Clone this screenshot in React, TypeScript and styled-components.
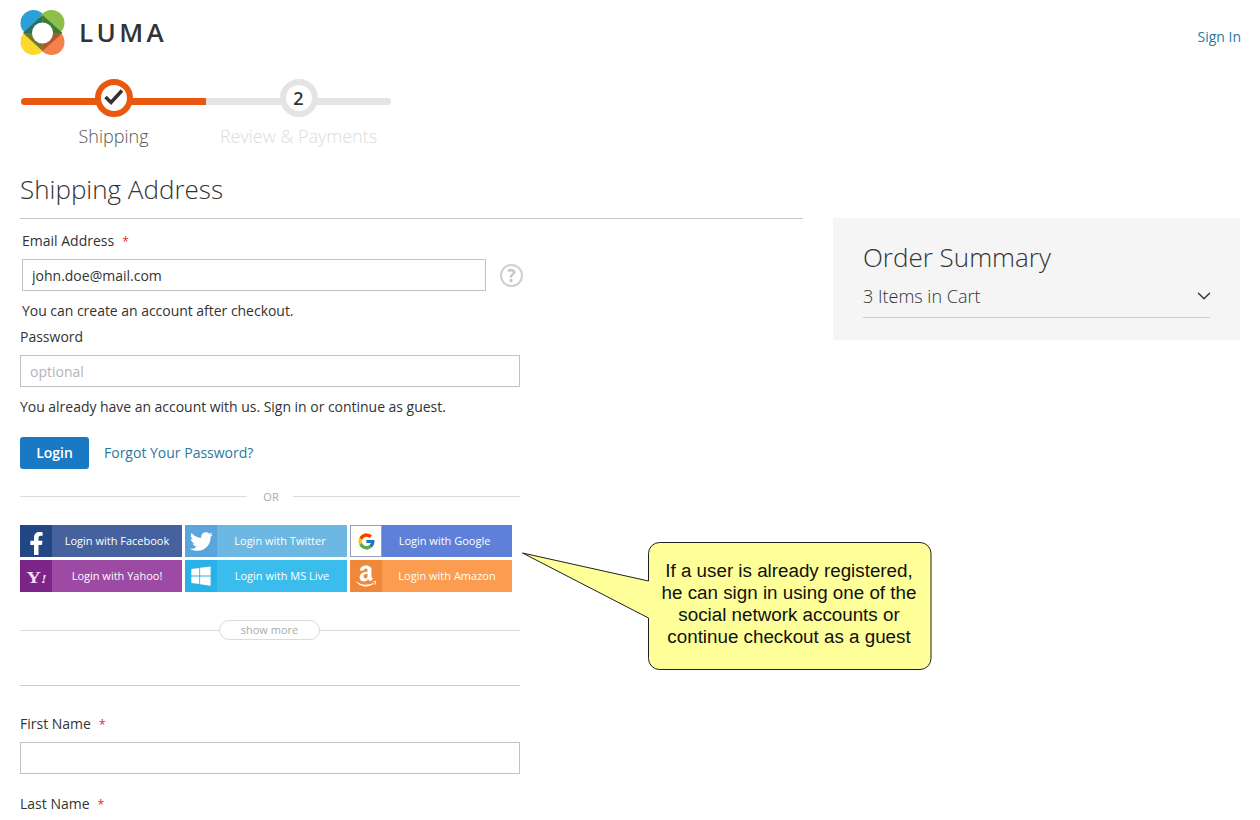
import React, { FC, ReactNode } from "react";
import styled, { createGlobalStyle } from "styled-components";
import { FaAmazon, FaFacebookF, FaTwitter, FaWindows } from "react-icons/fa";
import { FcGoogle } from "react-icons/fc";
import { FiChevronDown } from "react-icons/fi";

const GlobalStyle = createGlobalStyle`
  html, body {
    margin: 0;
    padding: 0;
    background: #fff;
  }
  * {
    box-sizing: border-box;
  }
`;

interface SocialItem {
  label: string;
  icon: ReactNode;
  iconBg: string;
  bg: string;
  inset?: number;
}

const YahooMark: FC = () => (
  <YahooText>
    Y<YahooBang>!</YahooBang>
  </YahooText>
);

const socials: SocialItem[] = [
  { label: "Login with Facebook", icon: <FacebookGlyph />, iconBg: "#234684", bg: "#46629e" },
  { label: "Login with Twitter", icon: <FaTwitter size={23} />, iconBg: "#5aa5dc", bg: "#6cb8e2", inset: 4 },
  { label: "Login with Google", icon: <FcGoogle size={19} />, iconBg: "#fff", bg: "#5f80d8", inset: 5 },
  { label: "Login with Yahoo!", icon: <YahooMark />, iconBg: "#7c2488", bg: "#9c4aa3" },
  { label: "Login with MS Live", icon: <FaWindows size={22} />, iconBg: "#29b2e8", bg: "#3abcec" },
  { label: "Login with Amazon", icon: <FaAmazon size={24} />, iconBg: "#f0883a", bg: "#fb9c50" },
];

function FacebookGlyph() {
  return <FacebookIcon size={23} />;
}

const Logo: FC = () => (
  <svg width="46" height="46" viewBox="0 0 46 46">
    <circle cx="13.5" cy="14" r="13" fill="#2a9fd8" />
    <circle cx="31.5" cy="14" r="13" fill="#8cc04a" />
    <circle cx="13.5" cy="33" r="13" fill="#fcd92e" />
    <circle cx="31.5" cy="33" r="13" fill="#f5814a" />
    <path d="M22.5 6 L22.5 24 L3 24 Z" fill="#2b6e62" />
    <path d="M22.5 6 L22.5 24 L42.5 24 Z" fill="#3f7a35" />
    <path d="M3 24 L22.5 24 L22.5 42 Z" fill="#6f7a2a" />
    <path d="M42.5 24 L22.5 24 L22.5 42 Z" fill="#a85a2a" />
    <circle cx="22.5" cy="24" r="10.5" fill="#fff" />
  </svg>
);

const SocialButton: FC<{ item: SocialItem }> = ({ item }) => (
  <Social $bg={item.bg}>
    <SocialIcon $bg={item.iconBg} $outlined={item.iconBg === "#fff"}>
      {item.icon}
    </SocialIcon>
    <SocialLabel $inset={item.inset ?? 0}>{item.label}</SocialLabel>
  </Social>
);

export default function App() {
  return (
    <Page>
      <GlobalStyle />
      <Header>
        <Brand>
          <Logo />
          <BrandName>LUMA</BrandName>
        </Brand>
        <SignIn href="#">Sign In</SignIn>
      </Header>

      <Progress>
        <Step>
          <StepBar $done />
          <StepCircle $done>
            <svg width="20" height="18" viewBox="0 0 20 18">
              <path d="M1.5 8 L7 13.5 L18 1.5" fill="none" stroke="#333" strokeWidth="3.5" />
            </svg>
          </StepCircle>
          <StepLabel>Shipping</StepLabel>
        </Step>
        <Step>
          <StepBar />
          <StepCircle>2</StepCircle>
          <StepLabel $muted>Review &amp; Payments</StepLabel>
        </Step>
      </Progress>

      <Columns>
        <FormColumn>
          <SectionTitle>Shipping Address</SectionTitle>
          <EmailBlock>
            <FieldLabel>
              Email Address<Star>*</Star>
            </FieldLabel>
            <EmailRow>
              <EmailInput readOnly value="john.doe@mail.com" />
              <HelpIcon>?</HelpIcon>
            </EmailRow>
            <Note>You can create an account after checkout.</Note>
          </EmailBlock>
          <PasswordLabel>Password</PasswordLabel>
          <TextInput readOnly placeholder="optional" />
          <Note>You already have an account with us. Sign in or continue as guest.</Note>
          <Actions>
            <LoginButton>Login</LoginButton>
            <ForgotLink href="#">Forgot Your Password?</ForgotLink>
          </Actions>
          <OrDivider>OR</OrDivider>
          <SocialGrid>
            {socials.map((item) => (
              <SocialButton key={item.label} item={item} />
            ))}
          </SocialGrid>
          <ShowMoreRow>
            <ShowMore>show more</ShowMore>
          </ShowMoreRow>
          <Separator />
          <NameLabel>
            First Name<Star>*</Star>
          </NameLabel>
          <TextInput readOnly />
          <LastNameLabel>
            Last Name<Star>*</Star>
          </LastNameLabel>
        </FormColumn>

        <Summary>
          <SummaryTitle>Order Summary</SummaryTitle>
          <SummaryRow>
            <span>3 Items in Cart</span>
            <SummaryChevron size={22} strokeWidth={1.5} />
          </SummaryRow>
        </Summary>
      </Columns>

      <Callout>
        <svg width="411" height="129" viewBox="0 0 411 129">
          <path
            d="M138.5 0.5 H399 a11 11 0 0 1 11 11 V116.5 a11 11 0 0 1 -11 11 H138.5 a11 11 0 0 1 -11 -11 V76 L1.5 11 L127.5 39 V11.5 a11 11 0 0 1 11 -11 Z"
            fill="#ffff99"
            stroke="#1f1f1f"
            strokeWidth="1"
          />
        </svg>
        <CalloutText>
          If a user is already registered,
          <br />
          he can sign in using one of the
          <br />
          social network accounts or
          <br />
          continue checkout as a guest
        </CalloutText>
      </Callout>
    </Page>
  );
}

const Page = styled.div`
  position: relative;
  width: 1260px;
  height: 820px;
  padding: 0 20px;
  overflow: hidden;
  font-family: "Open Sans", sans-serif;
  font-size: 14px;
  color: #333;
`;

const Header = styled.header`
  display: flex;
  justify-content: space-between;
  height: 78px;
  padding-top: 9px;
`;

const Brand = styled.div`
  display: flex;
  align-items: center;
  gap: 13px;
  height: 46px;
`;

const BrandName = styled.span`
  margin-top: -1px;
  font-size: 26px;
  font-weight: 600;
  letter-spacing: 3.4px;
  line-height: 1;
  color: #333;
`;

const SignIn = styled.a`
  margin: 18px -1px 0 0;
  color: #2a7a9e;
  text-decoration: none;
  line-height: 20px;
`;

const Progress = styled.div`
  display: flex;
  height: 95px;
  margin-left: 1px;
`;

const Step = styled.div`
  position: relative;
  display: flex;
  flex-direction: column;
  align-items: center;
  width: 185px;
`;

const StepBar = styled.div<{ $done?: boolean }>`
  position: absolute;
  top: 20px;
  left: 0;
  right: 0;
  height: 7px;
  background: ${(p) => (p.$done ? "#e8590f" : "#e4e4e4")};
  border-radius: ${(p) => (p.$done ? "4px 0 0 4px" : "0 4px 4px 0")};
`;

const StepCircle = styled.div<{ $done?: boolean }>`
  position: relative;
  display: flex;
  align-items: center;
  justify-content: center;
  width: 38px;
  height: 38px;
  margin-top: 1px;
  border-radius: 50%;
  background: #fff;
  border: 6px solid ${(p) => (p.$done ? "#e8590f" : "#e4e4e4")};
  font-size: 18px;
  font-weight: 600;
  color: #333;
`;

const StepLabel = styled.div<{ $muted?: boolean }>`
  margin-top: 7px;
  font-size: 18px;
  font-weight: 300;
  line-height: 24px;
  white-space: nowrap;
  color: ${(p) => (p.$muted ? "#dcdcdc" : "#555")};
`;

const Columns = styled.div`
  display: flex;
  gap: 30px;
`;

const FormColumn = styled.main`
  width: 783px;
`;

const SectionTitle = styled.h1`
  margin: 0 0 12px;
  height: 46px;
  border-bottom: 1px solid #c6c6c6;
  font-size: 26px;
  font-weight: 300;
  line-height: 33px;
`;

const EmailBlock = styled.div`
  padding-left: 2px;
`;

const FieldLabel = styled.label`
  display: block;
  line-height: 20px;
  color: #333;
`;

const Star = styled.span`
  margin-left: 8px;
  color: #e02b27;
  font-size: 12px;
`;

const EmailRow = styled.div`
  display: flex;
  align-items: center;
  gap: 14px;
  margin-top: 7px;
`;

const TextInput = styled.input`
  display: block;
  width: 500px;
  height: 32px;
  padding: 0 9px;
  border: 1px solid #c2c2c2;
  background: #fff;
  font: 14px "Open Sans", sans-serif;
  color: #333;
  outline: none;

  &::placeholder {
    color: #b5b5b5;
  }
`;

const EmailInput = styled(TextInput)`
  width: 464px;
`;

const HelpIcon = styled.span`
  display: flex;
  align-items: center;
  justify-content: center;
  width: 23px;
  height: 23px;
  border: 2px solid #cfcfcf;
  border-radius: 50%;
  font-size: 17px;
  font-weight: 700;
  color: #c4c4c4;
`;

const Note = styled.p`
  margin: 10px 0 0;
  line-height: 20px;
  letter-spacing: -0.03px;
  color: #333;
`;

const PasswordLabel = styled(FieldLabel)`
  margin: 6px 0 8px;
`;

const Actions = styled.div`
  display: flex;
  align-items: center;
  gap: 15px;
  margin-top: 20px;
`;

const LoginButton = styled.button`
  width: 69px;
  height: 32px;
  padding: 0 0 2px;
  border: 0;
  border-radius: 3px;
  background: #1979c3;
  color: #fff;
  font: 600 14px "Open Sans", sans-serif;
`;

const ForgotLink = styled.a`
  margin-bottom: 2px;
  color: #2a7a9e;
  text-decoration: none;
`;

const OrDivider = styled.div`
  display: flex;
  align-items: center;
  gap: 16px;
  width: 500px;
  height: 20px;
  margin-top: 17px;
  font-size: 11px;
  color: #aaa;

  &::before,
  &::after {
    content: "";
    flex: 1;
    border-top: 1px solid #dcdcdc;
  }

  &::after {
    margin-left: -2px;
  }
`;

const SocialGrid = styled.div`
  display: grid;
  grid-template-columns: repeat(3, 162px);
  grid-auto-rows: 32px;
  gap: 3px;
  margin-top: 19px;
`;

const Social = styled.div<{ $bg: string }>`
  display: flex;
  background: ${(p) => p.$bg};
  color: #fff;
`;

const SocialIcon = styled.span<{ $bg: string; $outlined?: boolean }>`
  display: flex;
  flex: none;
  align-items: center;
  justify-content: center;
  width: 32px;
  background: ${(p) => p.$bg};
  border: ${(p) => (p.$outlined ? "1px solid #8fa0c0" : "0")};
`;

const SocialLabel = styled.span<{ $inset: number }>`
  flex: 1;
  padding-right: ${(p) => p.$inset}px;
  font-size: 11px;
  line-height: 32px;
  text-align: center;
  white-space: nowrap;
`;

const FacebookIcon = styled(FaFacebookF)`
  margin-top: 4px;
`;

const YahooText = styled.span`
  margin-top: 4px;
  font-family: "Liberation Serif", serif;
  font-size: 17px;
  font-weight: 700;
  color: #f3dff3;
  transform: scaleX(1.2);
`;

const YahooBang = styled.span`
  font-size: 12px;
  font-style: italic;
`;

const ShowMoreRow = styled.div`
  display: flex;
  align-items: center;
  width: 500px;
  height: 20px;
  margin-top: 28px;

  &::before {
    content: "";
    flex: 0 0 199px;
    border-top: 1px solid #dcdcdc;
  }

  &::after {
    content: "";
    flex: 1;
    border-top: 1px solid #dcdcdc;
  }
`;

const ShowMore = styled.span`
  width: 101px;
  height: 20px;
  border: 1px solid #dcdcdc;
  border-radius: 10px;
  font-size: 11px;
  line-height: 18px;
  text-align: center;
  color: #aaa;
`;

const Separator = styled.hr`
  width: 500px;
  margin: 45px 0 0;
  border: 0;
  border-top: 1px solid #ccc;
`;

const NameLabel = styled(FieldLabel)`
  margin: 28px 0 7px;
`;

const LastNameLabel = styled(FieldLabel)`
  margin-top: 20px;
`;

const Summary = styled.aside`
  width: 407px;
  height: 122px;
  margin-top: 45px;
  padding: 22px 30px 0;
  background: #f5f5f5;
`;

const SummaryTitle = styled.h2`
  margin: 0;
  font-size: 26px;
  font-weight: 300;
  line-height: 34px;
`;

const SummaryRow = styled.div`
  display: flex;
  align-items: center;
  justify-content: space-between;
  height: 44px;
  border-bottom: 1px solid #ccc;
  font-size: 18px;
  font-weight: 300;
`;

const SummaryChevron = styled(FiChevronDown)`
  margin-right: -5px;
  color: #333;
`;

const Callout = styled.div`
  position: absolute;
  left: 521px;
  top: 542px;
  width: 411px;
  height: 129px;
`;

const CalloutText = styled.div`
  position: absolute;
  left: 126px;
  right: 1px;
  top: 18px;
  font-family: "Liberation Sans", sans-serif;
  font-size: 18.8px;
  line-height: 22px;
  text-align: center;
  color: #111;
`;
